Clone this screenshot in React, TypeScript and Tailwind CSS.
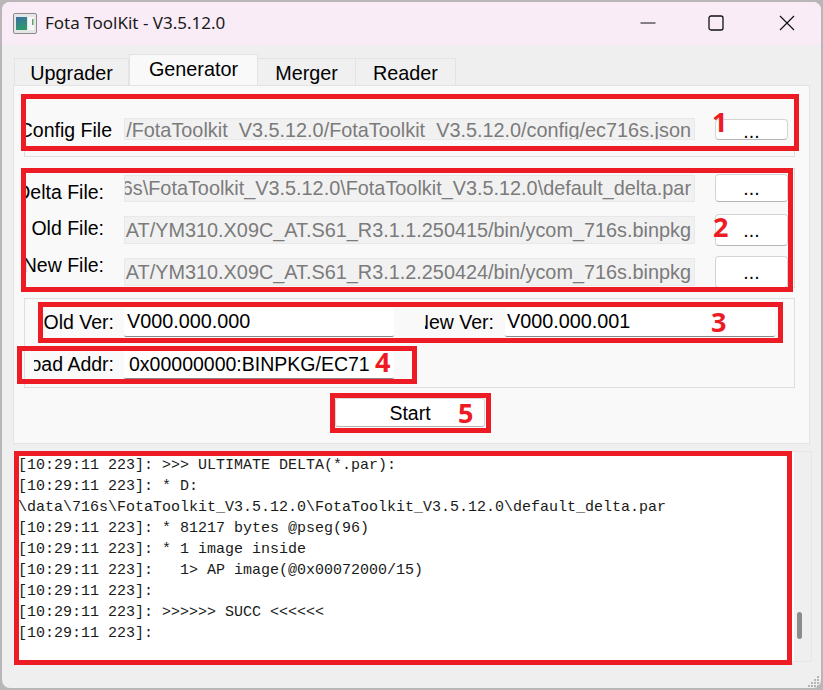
const logLines = [
  "[10:29:11 223]: >>> ULTIMATE DELTA(*.par):",
  "[10:29:11 223]: * D:",
  "\\data\\716s\\FotaToolkit_V3.5.12.0\\FotaToolkit_V3.5.12.0\\default_delta.par",
  "[10:29:11 223]: * 81217 bytes @pseg(96)",
  "[10:29:11 223]: * 1 image inside",
  "[10:29:11 223]:   1> AP image(@0x00072000/15)",
  "[10:29:11 223]:",
  "[10:29:11 223]: >>>>>> SUCC <<<<<<",
  "[10:29:11 223]:",
];

const fileRows = [
  { label: "Delta File:", value: "716s\\FotaToolkit_V3.5.12.0\\FotaToolkit_V3.5.12.0\\default_delta.par", labelShift: "mt-[10px]", inputH: "h-[27px]", btnH: "h-[28px]" },
  { label: "Old File:", value: "AT/YM310.X09C_AT.S61_R3.1.1.250415/bin/ycom_716s.binpkg", labelShift: "mb-[2px]", inputH: "h-[28px]", btnH: "h-[32px]" },
  { label: "New File:", value: "AT/YM310.X09C_AT.S61_R3.1.2.250424/bin/ycom_716s.binpkg", labelShift: "mb-[12px]", inputH: "h-[28px]", btnH: "h-[32px]" },
];

function PathField({ value, className }: { value: string; className: string }) {
  return (
    <div className={`flex w-[571px] shrink-0 justify-end overflow-hidden whitespace-nowrap border border-[#e8e8e8] bg-[#f1f1f1] pr-[3px] text-[19.85px] leading-[23px] text-[#7b7b7b] ${className}`}>
      {value}
    </div>
  );
}

function BrowseButton({ className }: { className: string }) {
  return (
    <button type="button" className={`w-[73px] shrink-0 rounded-[4px] border border-[#d4d4d4] border-b-[#b5b5b5] bg-white text-center leading-[22px] text-black ${className}`}>
      ...
    </button>
  );
}

function ValueField({ value, className }: { value: string; className: string }) {
  return (
    <div className={`flex w-[270px] shrink-0 items-center overflow-hidden whitespace-nowrap rounded-[2px] border-b border-b-[#8a8a8a] bg-white text-black ${className}`}>
      {value}
    </div>
  );
}

function FieldLabel({ text, className }: { text: string; className: string }) {
  return <div className={`flex shrink-0 justify-end overflow-hidden whitespace-nowrap text-black ${className}`}>{text}</div>;
}

function Mark({ className }: { className: string }) {
  return <div className={`absolute border-[5px] border-[#ed1c24] ${className}`} />;
}

function MarkNumber({ className, children }: { className: string; children: React.ReactNode }) {
  return (
    <span className={`absolute text-[27px] leading-none font-bold text-[#ed1c24] [font-family:'Open_Sans',sans-serif] ${className}`}>
      {children}
    </span>
  );
}

export default function App() {
  return (
    <div className="relative h-[690px] w-[823px] overflow-hidden bg-[#b9b6b8] p-[2px] text-[19.5px] [font-family:'Liberation_Sans',Arial,sans-serif]">
      <div className="flex h-[686px] w-[819px] flex-col overflow-hidden rounded-[8px] bg-[#efefef]">
        {/* title bar */}
        <div className="flex h-[43px] shrink-0 items-center bg-[#f9ecf7]">
          <svg width="24" height="21" viewBox="0 0 24 21" className="ml-[11px]">
            <defs>
              <linearGradient id="appIcon" x1="0" y1="0" x2="0.4" y2="1">
                <stop offset="0" stopColor="#3a6ea5" />
                <stop offset="1" stopColor="#2f9a6a" />
              </linearGradient>
            </defs>
            <rect x="0.5" y="0.5" width="23" height="20" rx="1.5" fill="#e6e6e6" stroke="#8a8a8a" />
            <rect x="3" y="4" width="11" height="13" fill="url(#appIcon)" />
            <rect x="15" y="4" width="6" height="13" fill="#f7f7f7" />
            <rect x="19" y="6" width="1.5" height="6" fill="#5aa56e" />
          </svg>
          <span className="mb-[2px] ml-[8px] text-[17px] text-[#1a1a1a] [font-family:'Noto_Sans',sans-serif]">Fota ToolKit - V3.5.12.0</span>
          <div className="mb-[2px] ml-auto flex items-center">
            <svg width="16" height="16" viewBox="0 0 16 16" className="mr-[52px]">
              <path d="M0.5 8h15" stroke="#111" strokeWidth="1" />
            </svg>
            <svg width="16" height="16" viewBox="0 0 16 16" className="mr-[55px]">
              <rect x="1" y="1" width="14" height="14" rx="2" fill="none" stroke="#111" strokeWidth="1.3" />
            </svg>
            <svg width="16" height="16" viewBox="0 0 16 16" className="mr-[26px]">
              <path d="M1 1l14 14M15 1L1 15" stroke="#111" strokeWidth="1.2" />
            </svg>
          </div>
        </div>

        {/* tabs */}
        <div className="mt-[10px] flex h-[30px] shrink-0 items-end pl-[12px] text-[19.8px] text-black">
          <div className="flex h-[27px] w-[115px] items-center justify-center border border-b-0 border-[#e3e3e3] bg-[#f0f0f0] pt-[4px]">Upgrader</div>
          <div className="z-10 flex h-[31px] w-[129px] items-center justify-center border border-b-0 border-[#e3e3e3] bg-[#f9f9f9]">Generator</div>
          <div className="flex h-[27px] w-[98px] items-center justify-center border border-b-0 border-l-0 border-[#e3e3e3] bg-[#f0f0f0] pt-[4px]">Merger</div>
          <div className="flex h-[27px] w-[100px] items-center justify-center border border-b-0 border-l-0 border-[#e3e3e3] bg-[#f0f0f0] pt-[4px]">Reader</div>
        </div>

        {/* generator pane */}
        <div className="ml-[11px] flex h-[359px] w-[797px] shrink-0 flex-col border border-[#e3e3e3] bg-[#f9f9f9] pl-[10px] pt-[9px]">
          <div className="flex h-[62px] w-[771px] items-end border border-t-0 border-[#dedede] pb-[16px]">
            <FieldLabel text="Config File" className="mb-[-2px] w-[87px] leading-[23px]" />
            <PathField value="/FotaToolkit_V3.5.12.0/FotaToolkit_V3.5.12.0/config/ec716s.json" className="ml-[12px] h-[22px] items-start" />
            <BrowseButton className="ml-[20px] h-[21px]" />
          </div>

          <div className="mt-[11px] flex h-[120px] w-[771px] flex-col border border-[#dedede] pt-[3px]">
            {fileRows.map((row, i) => (
              <div key={row.label} className={`flex h-[32px] items-center ${i > 0 ? "mt-[10px]" : ""}`}>
                <FieldLabel text={row.label} className={`w-[79px] ${row.labelShift}`} />
                <PathField value={row.value} className={`ml-[20px] items-center ${row.inputH}`} />
                <BrowseButton className={`ml-[20px] ${row.btnH}`} />
              </div>
            ))}
          </div>

          <div className="mt-[10px] flex h-[90px] w-[771px] flex-col border border-[#dedede] pt-[9px]">
            <div className="flex h-[29px] items-center">
              <FieldLabel text="Old Ver:" className="w-[89px]" />
              <ValueField value="V000.000.000" className="ml-[10px] h-[29px] pl-[3px] text-[19.8px]" />
              <FieldLabel text="New Ver:" className="ml-[31px] w-[69px]" />
              <ValueField value="V000.000.001" className="ml-[11px] h-[29px] pl-[2px] text-[19.8px]" />
            </div>
            <div className="mt-[14px] flex h-[28px] items-center">
              <FieldLabel text="Load Addr:" className="ml-[9px] w-[80px]" />
              <ValueField value="0x00000000:BINPKG/EC71" className="ml-[10px] h-[28px] pl-[5px]" />
            </div>
          </div>

          <button type="button" className="mt-[10px] ml-[311px] h-[29px] w-[150px] rounded-[3px] border border-[#d8d8d8] border-b-[#b5b5b5] bg-white text-black">
            Start
          </button>
        </div>

        {/* log output */}
        <div className="mt-[7px] ml-[12px] flex h-[211px] w-[798px] shrink-0 border border-[#e6e6e6]">
          <div className="h-full w-[779px] overflow-hidden bg-white pl-[3px] pt-[3px] text-[15px] leading-[21px] whitespace-pre text-[#1a1a1a] [font-family:'Liberation_Mono',monospace]">
            {logLines.map((line, i) => (
              <div key={i}>{line}</div>
            ))}
          </div>
          <div className="relative flex-1 bg-[#efefef]">
            <div className="absolute top-[160px] left-[3px] h-[27px] w-[5px] rounded-full bg-[#8b8b8b]" />
          </div>
        </div>
      </div>

      {/* red annotation marks over the screenshot */}
      <Mark className="top-[94px] left-[21px] h-[57px] w-[778px]" />
      <MarkNumber className="top-[108px] left-[712px]">1</MarkNumber>
      <Mark className="top-[168px] left-[21px] h-[124px] w-[772px]" />
      <MarkNumber className="top-[213px] left-[713px]">2</MarkNumber>
      <Mark className="top-[302px] left-[38px] h-[41px] w-[745px]" />
      <MarkNumber className="top-[308px] left-[711px]">3</MarkNumber>
      <Mark className="top-[346px] left-[17px] h-[38px] w-[400px]" />
      <MarkNumber className="top-[348px] left-[375px]">4</MarkNumber>
      <Mark className="top-[393px] left-[330px] h-[40px] w-[161px]" />
      <MarkNumber className="top-[399px] left-[458px]">5</MarkNumber>
      <Mark className="top-[451px] left-[14px] h-[214px] w-[778px]" />

      <svg width="12" height="12" viewBox="0 0 12 12" className="absolute top-[675px] left-[808px]">
        <path d="M9 1h2v2H9zM6 4h2v2H6zM9 4h2v2H9zM3 7h2v2H3zM6 7h2v2H6zM9 7h2v2H9zM0 10h2v2H0zM3 10h2v2H3zM6 10h2v2H6zM9 10h2v2H9z" fill="#b5b5b5" />
      </svg>
    </div>
  );
}
